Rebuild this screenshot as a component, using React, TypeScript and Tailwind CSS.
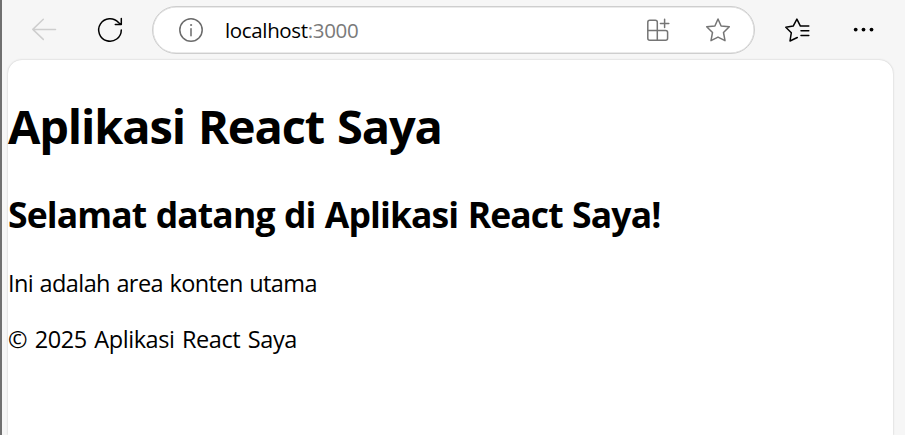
import type { ReactNode } from 'react';

function Icon({ size = 28, className, children }: { size?: number; className: string; children: ReactNode }) {
  return (
    <svg width={size} height={size} viewBox={`0 0 ${size} ${size}`} fill="none" stroke="currentColor" strokeWidth="1.5" strokeLinecap="round" strokeLinejoin="round" className={`block shrink-0 ${className}`}>
      {children}
    </svg>
  );
}

function Toolbar() {
  return (
    <header className="flex h-[60px] shrink-0 items-start">
      <Icon className="mt-4 ml-7 text-[#cecece]">
        <path d="M25.5 13.4H2.8M13.3 3.2 2.8 13.4l10.5 10" />
      </Icon>
      <Icon className="mt-4 ml-[38px] text-black">
        <path d="M25.3 14A11.3 11.3 0 1 1 22.5 6.5l2.5 2M25.3 2.6v5.9h-6" />
      </Icon>
      <div className="mt-1.5 ml-[28px] flex h-12 w-[603px] items-start rounded-full border border-[#cecece] bg-white shadow-[inset_0_0_0_0.5px_#d5d5d5]">
        <Icon className="mt-[9px] ml-6 text-[#6b6b6b]">
          <circle cx="14" cy="14" r="11.2" />
          <path d="M14 12.7v7" />
          <circle cx="14" cy="9" r=".6" fill="currentColor" strokeWidth=".8" />
        </Icon>
        <div className="mt-[9px] ml-[20px] flex-1 text-[20.5px] leading-7 tracking-[-0.35px] text-black">
          localhost<span className="text-[#7a7a7a]">:3000</span>
        </div>
        <Icon className="mt-[9px] mr-8 text-[#757575]">
          <path d="M3.8 6.2a2 2 0 0 1 2-2h5.5a2 2 0 0 1 2 2v8.2h8.3a2 2 0 0 1 2 2v5.8a2 2 0 0 1-2 2H5.8a2 2 0 0 1-2-2ZM3.8 14.4h9.5v9.8M20.6 3.2v8.4M16.4 7.4h8.4" />
        </Icon>
        <Icon className="mt-[9px] mr-[22px] text-[#757575]">
          <path d="m14 3 3.1 7 8.2.8-5.8 5.7 1.5 8.2-7-3.6-7 3.6 1.5-8.2-5.8-5.7 8.2-.8Z" />
        </Icon>
      </div>
      <Icon className="mt-4 ml-7 text-black">
        <path d="M14.3 21.5 7 25l1.3-8.2L2.8 11.2l7.4-1.1 3.7-7 3.5 7h8.4M18 14.8h7.8M18 19.4h7.8" />
      </Icon>
      <Icon className="mt-4 ml-[39px] text-black">
        <g fill="currentColor" stroke="none">
          <circle cx="5.7" cy="13.6" r="1.9" />
          <circle cx="13.5" cy="13.6" r="1.9" />
          <circle cx="21.5" cy="13.6" r="1.9" />
        </g>
      </Icon>
    </header>
  );
}

export default function App() {
  return (
    <div className="flex h-[435px] w-[905px] flex-col overflow-hidden border-l-2 border-[#707070] bg-[#f6f6f6] font-['Open_Sans',sans-serif] text-black">
      <Toolbar />
      <main className="ml-1.5 w-[885px] flex-1 rounded-t-[14px] bg-white shadow-[0_0_2px_#bdbdbd]">
        <h1 className="mt-[34px] h-16 text-[47px] leading-[64px] font-bold tracking-[-1.15px] [word-spacing:2px] whitespace-nowrap">Aplikasi React Saya</h1>
        <h2 className="mt-[32px] h-12 text-[35.5px] leading-[48px] font-bold tracking-[-0.88px] [word-spacing:1px] whitespace-nowrap">Selamat datang di Aplikasi React Saya!</h2>
        <p className="mt-[29px] h-8 text-[23.5px] leading-8 tracking-[-0.6px] [word-spacing:1px]">Ini adalah area konten utama</p>
        <p className="mt-6 h-8 text-[23.5px] leading-8 tracking-[-0.45px] [word-spacing:2px]">© 2025 Aplikasi React Saya</p>
      </main>
    </div>
  );
}
